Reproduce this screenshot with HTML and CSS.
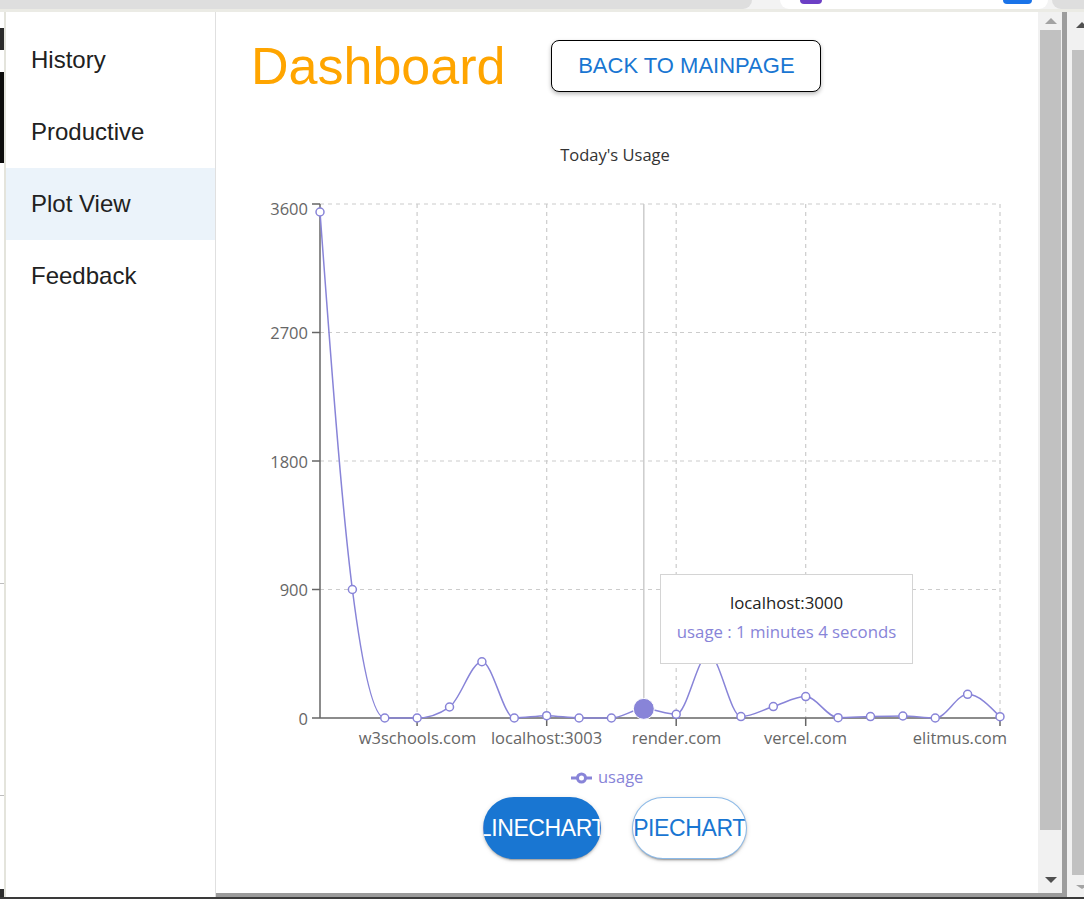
FILE: index.html
```html
<!DOCTYPE html>
<html lang="en">
<head>
<meta charset="utf-8">
<title>Dashboard</title>
<link rel="stylesheet" href="styles.css">
</head>
<body>
<div class="screen">
  <div class="topbar">
    <div class="tabs">
      <div class="pill pill-left"></div>
      <div class="pill pill-addr"><span class="ext ext-purple"></span><span class="ext ext-blue"></span></div>
      <div class="pill pill-right"></div>
    </div>
  </div>
  <div class="row">
    <div class="bgpage">
      <span class="bg-block bg-glyph"></span>
      <span class="bg-block bg-dark"></span>
      <span class="bg-rule bg-rule-1"></span>
      <span class="bg-rule bg-rule-2"></span>
      <span class="bg-block bg-foot"></span>
    </div>
    <nav class="sidebar">
      <div class="nav-item">History</div>
      <div class="nav-item">Productive</div>
      <div class="nav-item active">Plot View</div>
      <div class="nav-item">Feedback</div>
    </nav>
    <main class="main">
      <div class="header">
        <h1 class="title">Dashboard</h1>
        <button class="back-btn">BACK TO MAINPAGE</button>
      </div>
      <div class="chart">
        <svg class="plot" viewBox="251 140 780 650" width="780" height="650">
          <text class="chart-title" x="615" y="161" text-anchor="middle">Today's Usage</text>
          <g class="grid">
            <line x1="320" y1="204" x2="1000" y2="204"/>
            <line x1="320" y1="332.5" x2="1000" y2="332.5"/>
            <line x1="320" y1="461" x2="1000" y2="461"/>
            <line x1="320" y1="589.5" x2="1000" y2="589.5"/>
            <line x1="417.1" y1="204" x2="417.1" y2="718"/>
            <line x1="546.7" y1="204" x2="546.7" y2="718"/>
            <line x1="676.2" y1="204" x2="676.2" y2="718"/>
            <line x1="805.7" y1="204" x2="805.7" y2="718"/>
            <line x1="1000" y1="204" x2="1000" y2="718"/>
          </g>
          <line class="cursor" x1="643.8" y1="204" x2="643.8" y2="718"/>
          <g class="axis">
            <line x1="320" y1="204" x2="320" y2="718"/>
            <line x1="320" y1="718" x2="1000" y2="718"/>
            <line x1="312" y1="204" x2="320" y2="204"/>
            <line x1="312" y1="332.5" x2="320" y2="332.5"/>
            <line x1="312" y1="461" x2="320" y2="461"/>
            <line x1="312" y1="589.5" x2="320" y2="589.5"/>
            <line x1="312" y1="718" x2="320" y2="718"/>
            <line x1="417.1" y1="718" x2="417.1" y2="726"/>
            <line x1="546.7" y1="718" x2="546.7" y2="726"/>
            <line x1="676.2" y1="718" x2="676.2" y2="726"/>
            <line x1="805.7" y1="718" x2="805.7" y2="726"/>
            <line x1="1000" y1="718" x2="1000" y2="726"/>
          </g>
          <g class="tick-label">
            <text x="308" y="215" text-anchor="end">3600</text>
            <text x="308" y="339" text-anchor="end">2700</text>
            <text x="308" y="467.5" text-anchor="end">1800</text>
            <text x="308" y="596" text-anchor="end">900</text>
            <text x="308" y="724.5" text-anchor="end">0</text>
            <text x="417.5" y="743.5" text-anchor="middle">w3schools.com</text>
            <text x="546.5" y="743.5" text-anchor="middle">localhost:3003</text>
            <text x="676.5" y="743.5" text-anchor="middle">render.com</text>
            <text x="805.5" y="743.5" text-anchor="middle">vercel.com</text>
            <text x="1007" y="743.5" text-anchor="end">elitmus.com</text>
          </g>
          <g id="series"></g>
          <g class="legend">
            <line x1="571" y1="778" x2="592" y2="778"/>
            <circle cx="581.5" cy="778" r="4"/>
            <text x="598" y="783">usage</text>
          </g>
        </svg>
        <div class="tooltip">
          <div class="tooltip-label">localhost:3000</div>
          <div class="tooltip-item">usage : 1 minutes 4 seconds</div>
        </div>
      </div>
      <div class="chart-buttons">
        <button class="chart-btn line-btn">LINECHART</button>
        <button class="chart-btn pie-btn">PIECHART</button>
      </div>
    </main>
    <div class="vscroll">
      <div class="arrow-box arrow-box-up"><span class="tri-up light"></span></div>
      <div class="thumb"></div>
      <div class="arrow-box arrow-box-down"><span class="tri-down dark"></span></div>
    </div>
    <div class="frame-edge"></div>
    <div class="outer-scroll">
      <div class="outer-up"><span class="tri-up dark"></span></div>
      <div class="outer-thumb"></div>
      <div class="outer-down"><span class="tri-down light"></span></div>
    </div>
  </div>
  <div class="bottomline"></div>
</div>
<script src="script.js"></script>
</body>
</html>
```

FILE: styles.css
```css
* { box-sizing: border-box; }
html, body { margin: 0; padding: 0; }
body {
  width: 1084px;
  height: 899px;
  overflow: hidden;
  background: #ffffff;
  font-family: "Liberation Sans", Arial, sans-serif;
}
.screen {
  width: 1084px;
  height: 899px;
  overflow: hidden;
  display: flex;
  flex-direction: column;
}

/* top browser strip */
.topbar {
  height: 12px;
  flex: none;
  background: #ebebe5;
}
.tabs {
  height: 9px;
  display: flex;
  background: #f3f3f3;
}
.pill-left {
  flex: none;
  width: 752px;
  background: #dedede;
  border-bottom-right-radius: 9px;
}
.pill-addr {
  flex: none;
  width: 268px;
  margin-left: 28px;
  background: #ffffff;
  border-radius: 0 0 9px 9px;
  display: flex;
}
.ext {
  display: block;
  height: 4px;
  border-radius: 0 0 4px 4px;
}
.ext-purple { width: 22px; margin-left: 20px; background: #6c3fc5; }
.ext-blue { width: 29px; margin-left: 181px; background: #1a73e8; }
.pill-right {
  flex: 1;
  margin-left: 4px;
  background: #dedede;
  border-bottom-left-radius: 9px;
}

/* main row */
.row {
  flex: none;
  height: 885px;
  display: flex;
}

.bgpage {
  flex: none;
  width: 6px;
  background: #ffffff;
  border-right: 2px solid #e4e4dc;
  display: flex;
  flex-direction: column;
}
.bg-block { display: block; width: 4px; background: #0c0c0c; }
.bg-glyph { margin-top: 16px; height: 22px; background: #2a2a2a; }
.bg-dark { margin-top: 22px; height: 91px; }
.bg-rule { display: block; width: 4px; height: 1px; background: #bdbdbd; }
.bg-rule-1 { margin-top: 420px; }
.bg-rule-2 { margin-top: 211px; }
.bg-foot { margin-top: 93px; height: 8px; background: #2e2e2e; }

/* sidebar */
.sidebar {
  flex: none;
  width: 210px;
  background: #ffffff;
  border-right: 1px solid #e0e0e0;
  padding-top: 12px;
}
.nav-item {
  height: 72px;
  display: flex;
  align-items: center;
  padding-left: 25px;
  font-size: 24px;
  color: #212121;
}
.nav-item.active { background: #ebf3fa; }

/* main */
.main {
  flex: none;
  width: 822px;
  background: #ffffff;
  padding: 28px 0 0 35px;
  border-bottom: 4px solid #9b9b9b;
  display: flex;
  flex-direction: column;
}
.header {
  display: flex;
  align-items: center;
  height: 52px;
  gap: 46px;
}
.title {
  margin: 0;
  font-size: 52px;
  line-height: 52px;
  font-weight: 400;
  color: #ffa500;
}
.back-btn {
  width: 270px;
  height: 52px;
  padding: 0;
  border: 1px solid #000000;
  border-radius: 8px;
  background: #ffffff;
  color: #1976d2;
  font-family: "Liberation Sans", Arial, sans-serif;
  font-size: 22px;
  box-shadow: 0 2px 4px rgba(0, 0, 0, 0.28);
  display: flex;
  align-items: center;
  justify-content: center;
}

.chart {
  position: relative;
  width: 780px;
  height: 650px;
  margin-top: 48px;
}
.plot { display: block; width: 780px; height: 650px; overflow: visible; }
.chart-title {
  font-family: "Open Sans", "Noto Sans", sans-serif;
  font-size: 16.5px;
  fill: #333333;
}
.grid line { stroke: #cccccc; stroke-width: 1.2; stroke-dasharray: 4 4; }
.cursor { stroke: #cccccc; stroke-width: 1.5; }
.axis line { stroke: #666666; stroke-width: 1.5; }
.tick-label text {
  font-family: "Open Sans", "Noto Sans", sans-serif;
  font-size: 16.5px;
  fill: #666666;
}
.curve { fill: none; stroke: #8884d8; stroke-width: 1.5; }
.dot { fill: #ffffff; stroke: #8884d8; stroke-width: 1.5; }
.active-dot { fill: #8884d8; stroke: #ffffff; stroke-width: 1; }
.legend line { stroke: #8884d8; stroke-width: 3; }
.legend circle { fill: #ffffff; stroke: #8884d8; stroke-width: 3; }
.legend text {
  font-family: "Open Sans", "Noto Sans", sans-serif;
  font-size: 16.5px;
  fill: #8884d8;
}

.tooltip {
  position: absolute;
  left: 409px;
  top: 434px;
  width: 253px;
  height: 90px;
  background: #ffffff;
  border: 1px solid #d4d4d4;
  padding: 13px 8px 0;
  text-align: center;
  font-family: "Open Sans", "Noto Sans", sans-serif;
  font-size: 16.8px;
  line-height: 29px;
  white-space: nowrap;
}
.tooltip-label { color: #222222; }
.tooltip-item { color: #8884d8; }

.chart-buttons {
  display: flex;
  gap: 31px;
  margin-top: 7px;
  padding-left: 232px;
}
.chart-btn {
  flex: none;
  height: 62px;
  padding: 0;
  border-radius: 31px;
  overflow: hidden;
  white-space: nowrap;
  display: flex;
  align-items: center;
  justify-content: center;
  font-family: "Liberation Sans", Arial, sans-serif;
  font-size: 23px;
  letter-spacing: -0.4px;
  box-shadow: 0 3px 1px -2px rgba(0,0,0,0.2), 0 2px 2px 0 rgba(0,0,0,0.14), 0 1px 5px 0 rgba(0,0,0,0.12);
}
.line-btn {
  width: 118px;
  background: #1976d2;
  color: #ffffff;
  border: none;
}
.pie-btn {
  width: 115px;
  background: #ffffff;
  color: #1976d2;
  border: 1px solid rgba(25, 118, 210, 0.5);
}

/* popup scrollbar */
.vscroll {
  flex: none;
  width: 24px;
  background: #f1f1f1;
  border-bottom: 4px solid #9b9b9b;
  display: flex;
  flex-direction: column;
}
.arrow-box {
  display: flex;
  align-items: center;
  justify-content: center;
}
.arrow-box-up { height: 18px; padding-left: 2px; }
.thumb {
  height: 800px;
  margin: 0 1px 0 2px;
  background: #c1c1c1;
}
.arrow-box-down { margin-top: auto; height: 27px; padding-left: 2px; }
.tri-up {
  width: 0; height: 0;
  border-left: 6px solid transparent;
  border-right: 6px solid transparent;
  border-bottom: 6px solid #a3a3a3;
}
.tri-down {
  width: 0; height: 0;
  border-left: 6px solid transparent;
  border-right: 6px solid transparent;
  border-top: 6px solid #a3a3a3;
}
.tri-up.dark { border-bottom-color: #505050; }
.tri-down.dark { border-top-color: #505050; }

.frame-edge {
  flex: none;
  width: 5px;
  background: #9d9d9d;
}

/* outer page scrollbar */
.outer-scroll {
  flex: none;
  width: 22px;
  background: #f1f1f1;
  display: flex;
  flex-direction: column;
}
.outer-up {
  height: 38px;
  display: flex;
  justify-content: center;
  padding-top: 10px;
  padding-left: 8px;
}
.outer-thumb {
  height: 825px;
  margin-left: 5px;
  background: #c1c1c1;
}
.outer-down {
  display: flex;
  justify-content: center;
  padding-top: 10px;
  padding-left: 8px;
}
.outer-down .tri-down { border-top-width: 4px; }

.bottomline {
  flex: none;
  height: 2px;
  background: #3a3a3a;
}
```

FILE: script.js
```js
(function () {
  var data = [3544, 900, 0, 0, 77, 394, 0, 16, 0, 0, 64, 26, 448, 10, 80, 150, 2, 10, 14, 0, 166, 9];
  var X0 = 320, X1 = 1000, YT = 204, YB = 718, MAX = 3600;
  var n = data.length, step = (X1 - X0) / (n - 1);
  var pts = data.map(function (v, i) { return [X0 + i * step, YB - v * (YB - YT) / MAX]; });
  function sgn(x) { return x < 0 ? -1 : 1; }
  function slope3(a, b, c) {
    var h0 = b[0] - a[0], h1 = c[0] - b[0];
    var s0 = (b[1] - a[1]) / h0, s1 = (c[1] - b[1]) / h1;
    var p = (s0 * h1 + s1 * h0) / (h0 + h1);
    return (sgn(s0) + sgn(s1)) * Math.min(Math.abs(s0), Math.abs(s1), 0.5 * Math.abs(p)) || 0;
  }
  var t = new Array(n), i;
  for (i = 1; i < n - 1; i++) t[i] = slope3(pts[i - 1], pts[i], pts[i + 1]);
  t[0] = (3 * (pts[1][1] - pts[0][1]) / (pts[1][0] - pts[0][0]) - t[1]) / 2;
  t[n - 1] = (3 * (pts[n - 1][1] - pts[n - 2][1]) / (pts[n - 1][0] - pts[n - 2][0]) - t[n - 2]) / 2;
  var d = 'M' + pts[0][0] + ',' + pts[0][1];
  for (i = 0; i < n - 1; i++) {
    var a = pts[i], b = pts[i + 1], dx = (b[0] - a[0]) / 3;
    d += 'C' + (a[0] + dx) + ',' + (a[1] + dx * t[i]) + ',' + (b[0] - dx) + ',' + (b[1] - dx * t[i + 1]) + ',' + b[0] + ',' + b[1];
  }
  var NS = 'http://www.w3.org/2000/svg';
  var g = document.getElementById('series');
  var path = document.createElementNS(NS, 'path');
  path.setAttribute('d', d);
  path.setAttribute('class', 'curve');
  g.appendChild(path);
  pts.forEach(function (p, k) {
    if (k === 10) return;
    var c = document.createElementNS(NS, 'circle');
    c.setAttribute('cx', p[0]);
    c.setAttribute('cy', p[1]);
    c.setAttribute('r', 4);
    c.setAttribute('class', 'dot');
    g.appendChild(c);
  });
  var act = document.createElementNS(NS, 'circle');
  act.setAttribute('cx', pts[10][0]);
  act.setAttribute('cy', pts[10][1]);
  act.setAttribute('r', 10.5);
  act.setAttribute('class', 'active-dot');
  g.appendChild(act);
})();
```
